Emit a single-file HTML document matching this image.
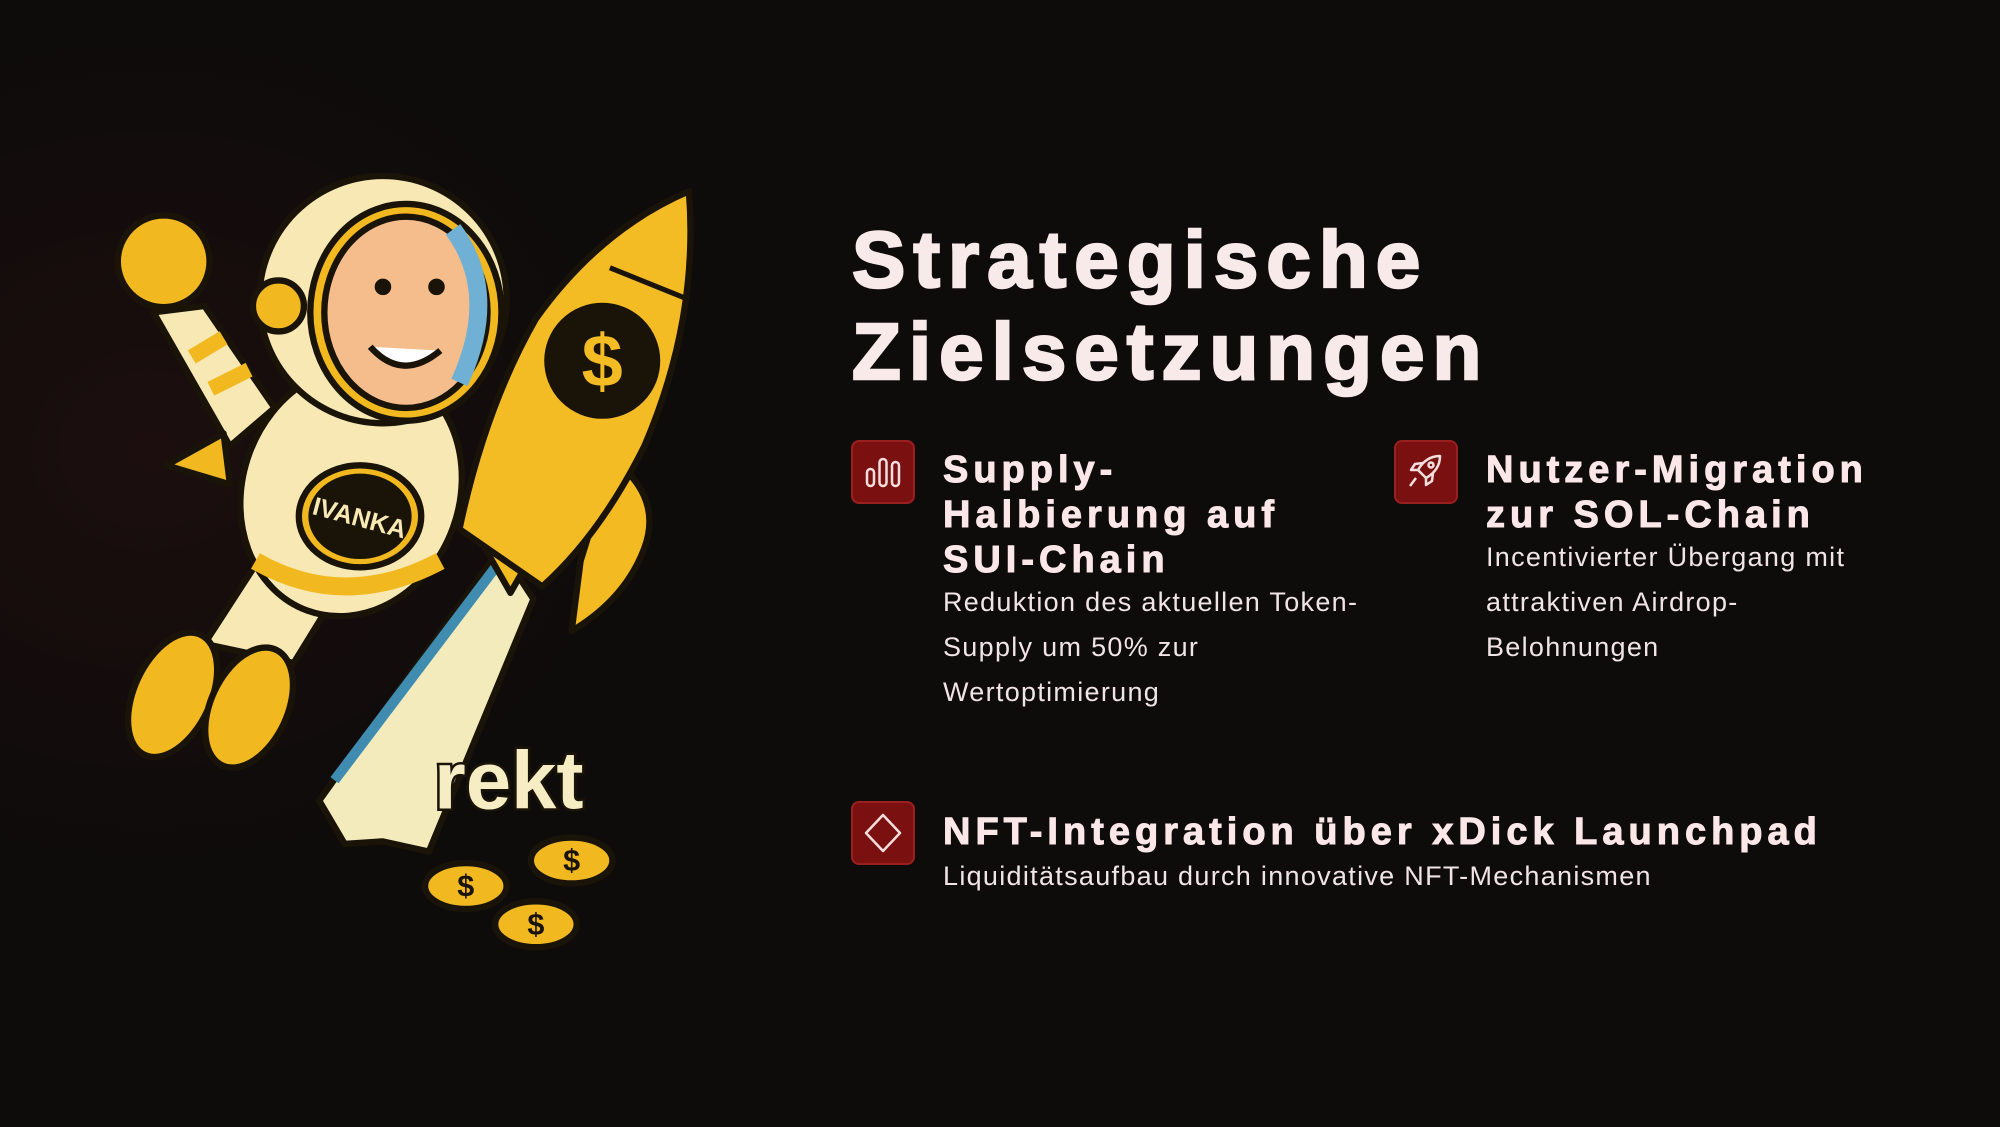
<!DOCTYPE html>
<html><head><meta charset="utf-8"><style>
html,body{margin:0;padding:0}
body{width:2000px;height:1127px;overflow:hidden;position:relative;background:radial-gradient(ellipse 700px 600px at 150px 450px,#1c0e0e 0%,#0e0b0b 70%),#0e0b0b;font-family:"Liberation Sans",sans-serif;color:#fbeaea}
svg.ill{position:absolute;left:0;top:0}
.t{position:absolute;left:852px;top:214px;font-size:80px;font-weight:bold;line-height:92px;letter-spacing:8px;color:#f9eaea;-webkit-text-stroke:2.5px #f9eaea}
.ic{position:absolute;width:60px;height:60px;background:#7b1010;border:2px solid #9a2020;border-radius:8px}
.ic svg{position:absolute;left:0;top:0}
.h{position:absolute;font-weight:bold;font-size:38px;line-height:45px;letter-spacing:5px;color:#fbe6e8;-webkit-text-stroke:1px #fbe6e8}
.d{position:absolute;font-size:27px;line-height:45px;letter-spacing:1.3px;color:#f0e4e4}
</style></head><body>
<svg class="ill" width="2000" height="1127" viewBox="0 0 1568 884">
<g stroke="#1a1408" stroke-width="5" stroke-linejoin="round">
 <path d="M250 628 L392 430 L418 470 L336 668 L300 660 L270 662 Z" fill="#f4ebbc"/>
 <path d="M262 612 L392 440" stroke="#3f8cb0" stroke-width="8"/>
 <path d="M480 360 Q520 390 505 430 Q490 470 448 495 L455 440 Z" fill="#f3ba22"/>
 <path d="M360 395 L395 365 L420 430 L400 465 Z" fill="#f3ba22"/>
 <path d="M540 150 Q548 250 505 350 Q470 420 425 460 L360 415 Q380 320 420 250 Q470 180 540 150 Z" fill="#f4bc24"/>
 <path d="M478 210 L540 235" stroke-width="4" fill="none"/>
 <circle cx="472" cy="283" r="43" fill="#1a1408"/>
 <path d="M215 420 L270 455 L230 520 L160 505 Z" fill="#f8e9b4"/>
 <ellipse cx="135" cy="545" rx="30" ry="52" transform="rotate(25 135 545)" fill="#f2b820"/>
 <ellipse cx="195" cy="555" rx="30" ry="50" transform="rotate(25 195 555)" fill="#f2b820"/>
 <ellipse cx="275" cy="385" rx="85" ry="100" transform="rotate(20 275 385)" fill="#f8e9b4"/>
 <path d="M200 440 Q270 480 345 440" fill="none" stroke="#f2b820" stroke-width="14"/>
 <path d="M120 245 L160 240 L215 320 L180 350 Z" fill="#f8e9b4"/>
 <path d="M175 340 L130 365 L180 380 Z" fill="#f2b820"/>
 <path d="M150 280 L175 265 M165 305 L195 290" stroke="#f2b820" stroke-width="12"/>
 <circle cx="128" cy="205" r="36" fill="#f2b820"/>
 <circle cx="300" cy="235" r="97" fill="#f8e9b4"/>
 <circle cx="218" cy="240" r="20" fill="#f2b820"/>
 <ellipse cx="318" cy="245" rx="75" ry="85" fill="#f2b820"/>
 <ellipse cx="318" cy="245" rx="64" ry="75" fill="#f5bd8c"/>
 <path d="M355 180 Q392 230 360 300" fill="none" stroke="#6fb0d4" stroke-width="14"/>
 <path d="M290 272 Q315 300 345 275" fill="#fff"/>
 <circle cx="300" cy="225" r="4" fill="#1a1408"/><circle cx="342" cy="225" r="4" fill="#1a1408"/>
 <ellipse cx="282" cy="405" rx="48" ry="40" fill="#f2b820"/>
 <ellipse cx="282" cy="405" rx="38" ry="31" fill="#1a1408"/>
 <ellipse cx="365" cy="695" rx="32" ry="18" fill="#f2b820"/>
 <ellipse cx="448" cy="675" rx="32" ry="18" fill="#f2b820"/>
 <ellipse cx="420" cy="725" rx="32" ry="18" fill="#f2b820"/>
</g>
<text x="472" y="303" text-anchor="middle" font-family="Liberation Sans" font-weight="bold" font-size="58" fill="#f4bc24">$</text>
<text x="282" y="413" text-anchor="middle" font-family="Liberation Sans" font-weight="bold" font-size="20" fill="#f8e9b4" transform="rotate(15 282 405)">IVANKA</text>
<text x="365" y="703" text-anchor="middle" font-family="Liberation Sans" font-weight="bold" font-size="24" fill="#1a1408">$</text>
<text x="448" y="683" text-anchor="middle" font-family="Liberation Sans" font-weight="bold" font-size="24" fill="#1a1408">$</text>
<text x="420" y="733" text-anchor="middle" font-family="Liberation Sans" font-weight="bold" font-size="24" fill="#1a1408">$</text>
<text x="340" y="634" font-family="Liberation Sans" font-weight="bold" font-size="64" fill="#f7edc4" stroke="#1a1408" stroke-width="4" paint-order="stroke">rekt</text>
</svg>

<div class="t">Strategische<br>Zielsetzungen</div>

<div class="ic" style="left:851px;top:440px"><svg width="60" height="60" viewBox="0 0 60 60" fill="none" stroke="#f5dede" stroke-width="2.5"><rect x="14" y="27" width="7" height="17" rx="3.5"/><rect x="26.5" y="17" width="7" height="27" rx="3.5"/><rect x="39" y="20" width="7" height="24" rx="3.5"/></svg></div>
<div class="h" style="left:943px;top:448px">Supply-<br>Halbierung auf<br>SUI-Chain</div>
<div class="d" style="left:943px;top:580px">Reduktion des aktuellen Token-<br>Supply um 50% zur<br>Wertoptimierung</div>

<div class="ic" style="left:1394px;top:440px"><svg width="60" height="60" viewBox="0 0 60 60" fill="none" stroke="#f5dede" stroke-width="2.5" stroke-linejoin="round"><path d="M44 14 Q30 14 22 28 L30 36 Q44 28 44 14 Z"/><circle cx="35" cy="23" r="2.5"/><path d="M22 28 L15 28 L19 22 L27 21"/><path d="M30 36 L30 43 L36 39 L37 31"/><path d="M20 36 L14 44"/></svg></div>
<div class="h" style="left:1486px;top:448px">Nutzer-Migration<br>zur SOL-Chain</div>
<div class="d" style="left:1486px;top:535px">Incentivierter Übergang mit<br>attraktiven Airdrop-<br>Belohnungen</div>

<div class="ic" style="left:851px;top:801px"><svg width="60" height="60" viewBox="0 0 60 60" fill="none" stroke="#f5dede" stroke-width="2.5" stroke-linejoin="round"><path d="M30 12 L47 30 L30 48 L13 30 Z"/></svg></div>
<div class="h" style="left:943px;top:810px">NFT-Integration über xDick Launchpad</div>
<div class="d" style="left:943px;top:854px">Liquiditätsaufbau durch innovative NFT-Mechanismen</div>
</body></html>
